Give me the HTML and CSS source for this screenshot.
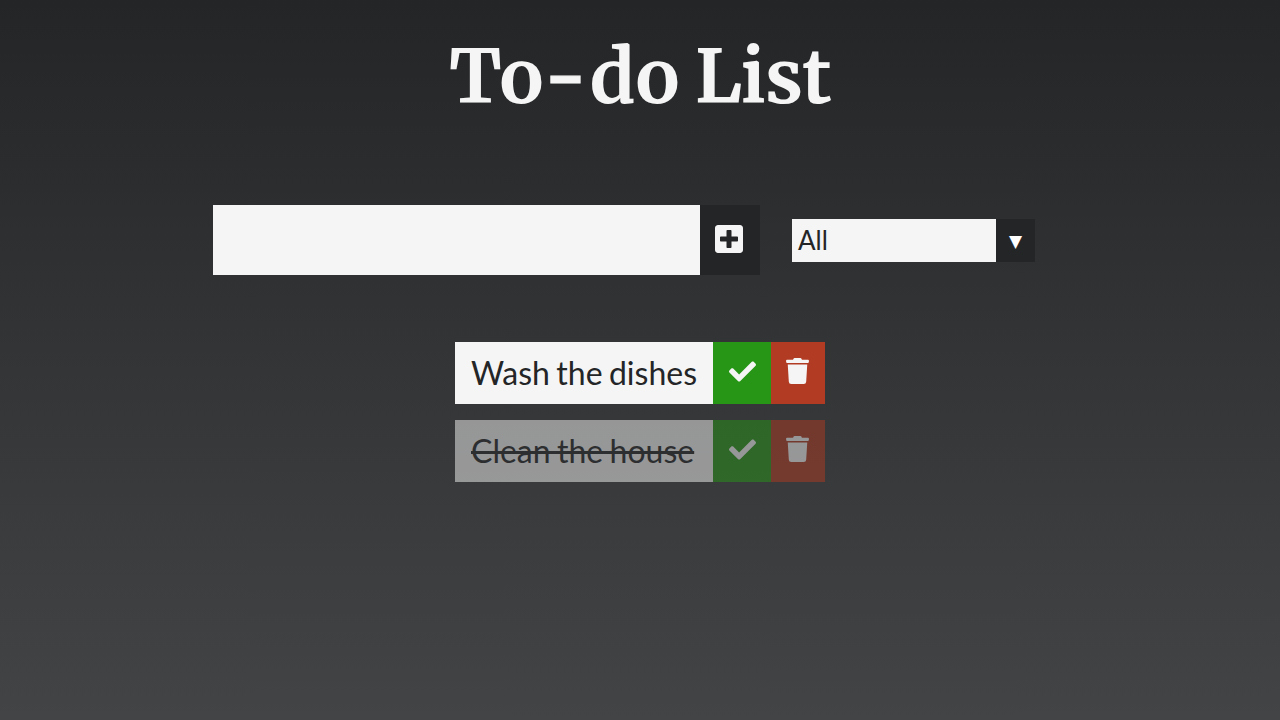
FILE: index.html
```html
<!DOCTYPE html>
<html lang="en">
<head>
<meta charset="utf-8">
<title>To-do List</title>
<link rel="stylesheet" href="styles.css">
</head>
<body>
<svg class="symbols" aria-hidden="true">
  <symbol id="plus" viewBox="0 0 448 512"><path d="M400 32H48C21.500 32 0 53.500 0 80v352c0 26.500 21.500 48 48 48h352c26.500 0 48-21.500 48-48V80c0-26.500-21.500-48-48-48zm-32 252c0 6.600-5.400 12-12 12h-92v92c0 6.600-5.400 12-12 12h-56c-6.600 0-12-5.400-12-12v-92H92c-6.600 0-12-5.400-12-12v-56c0-6.600 5.400-12 12-12h92v-92c0-6.600 5.400-12 12-12h56c6.600 0 12 5.400 12 12v92h92c6.600 0 12 5.400 12 12v56z"/></symbol>
  <symbol id="check" viewBox="0 0 512 512"><path d="M173.898 439.404l-166.400-166.400c-9.997-9.997-9.997-26.206 0-36.204l36.203-36.204c9.997-9.998 26.207-9.998 36.204 0L192 312.690 432.095 72.596c9.997-9.997 26.207-9.997 36.204 0l36.203 36.204c9.997 9.997 9.997 26.206 0 36.204l-294.400 294.401c-9.998 9.997-26.207 9.997-36.204-.001z"/></symbol>
  <symbol id="trash" viewBox="0 0 448 512"><path d="M432 32H312l-9.400-18.700A24 24 0 0 0 281.100 0H166.800a23.720 23.720 0 0 0-21.400 13.300L136 32H16A16 16 0 0 0 0 48v32a16 16 0 0 0 16 16h416a16 16 0 0 0 16-16V48a16 16 0 0 0-16-16zM32 128l21.200 339a48 48 0 0 0 47.900 45h245.800a48 48 0 0 0 47.900-45L416 128z"/></symbol>
</svg>
<header class="header"><h1 class="title">To<span class="dash">-</span>do <span class="last-word">List</span></h1></header>
<form class="form">
  <input class="todo-input" type="text" aria-label="New task">
  <button class="add" type="button" aria-label="Add"><svg class="icon-plus"><use href="#plus"/></svg></button>
  <div class="filter"><span class="filter-value">All</span><span class="filter-arrow">▼</span></div>
</form>
<ul class="list">
  <li class="todo"><span class="todo-text">Wash the dishes</span><button class="done" aria-label="Complete"><svg class="icon-check"><use href="#check"/></svg></button><button class="remove" aria-label="Delete"><svg class="icon-trash"><use href="#trash"/></svg></button></li>
  <li class="todo completed"><span class="todo-text">Clean the house</span><button class="done" aria-label="Complete"><svg class="icon-check"><use href="#check"/></svg></button><button class="remove" aria-label="Delete"><svg class="icon-trash"><use href="#trash"/></svg></button></li>
</ul>
</body>
</html>
```
FILE: styles.css
```css
* { margin: 0; padding: 0; box-sizing: border-box; }
body {
  min-height: 100vh;
  background: linear-gradient(#242527, #434445);
  color: #f5f5f5;
  font-family: Lato, sans-serif;
  overflow: hidden;
}
button { border: 0; color: #f5f5f5; display: flex; align-items: center; justify-content: center; }
.symbols { display: none; }
.header { height: 205px; padding-top: 32px; display: flex; justify-content: center; }
.title {
  font: bold 73.7px/90px Merriweather, "DejaVu Serif", serif;
  word-spacing: -2px;
  white-space: nowrap;
}
.dash { margin: 0 3px 0 1px; -webkit-text-stroke: 1px currentColor; }
.last-word { letter-spacing: -.8px; }
.form { display: flex; align-items: center; padding-left: 213px; height: 70px; }
.todo-input { width: 487px; height: 70px; border: 0; background: #f5f5f5; color: #242527; font: 32px Lato, sans-serif; padding: 8px; }
.add { width: 60px; height: 70px; background: #242527; }
.icon-plus { width: 28px; height: 32px; fill: currentColor; margin: 0 2px 2px 0; }
.filter { display: flex; width: 243px; height: 43px; margin-left: 32px; }
.filter-value { width: 204px; background: #f5f5f5; color: #242527; font-size: 26px; line-height: 42px; padding-left: 6px; }
.filter-arrow { width: 39px; background: #242527; font: 17px/44px "DejaVu Sans", sans-serif; text-align: center; color: #fff; }
.list { list-style: none; display: flex; flex-direction: column; align-items: center; gap: 16px; padding-top: 67px; }
.todo { display: flex; width: 370px; height: 62px; background: #f5f5f5; }
.todo-text { flex: 1; color: #242527; font-size: 32px; word-spacing: -1.8px; line-height: 61px; padding-left: 16px; white-space: nowrap; }
.done { width: 58px; background: #279617; }
.remove { width: 54px; background: #b23b23; }
.icon-check { width: 27px; height: 27px; fill: currentColor; margin: 0 0 3px 0; }
.icon-trash { width: 23px; height: 26px; fill: currentColor; margin: 0 1px 4px 0; }
.completed { opacity: .5; }
.completed .todo-text { text-decoration: line-through; }
```
